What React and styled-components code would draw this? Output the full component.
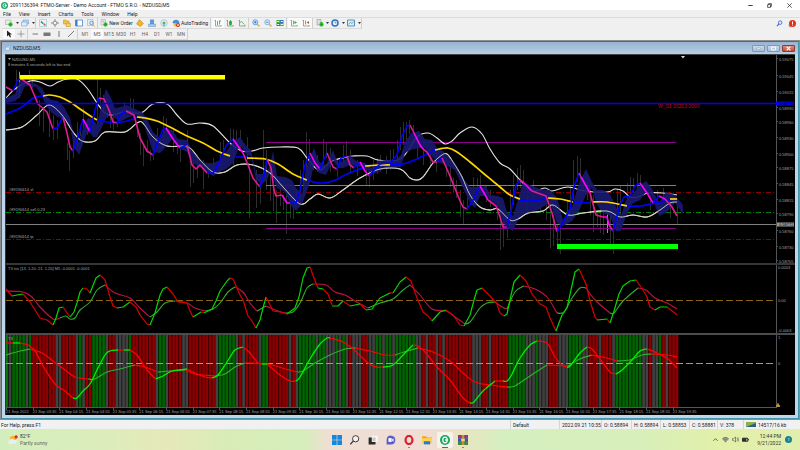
import React from 'react'
import styled, { createGlobalStyle } from 'styled-components'

const UI_FONT = 'Roboto, "Open Sans", sans-serif'
const CHART_FONT = '"Liberation Sans", Arial, sans-serif'

const GlobalStyle = createGlobalStyle`
  * { box-sizing: border-box; }
  body {
    margin: 0;
    background: #f0f0f0;
    color: #222;
    font: 5px/8px ${UI_FONT};
  }
  svg { display: block; }
`

const Button = styled.button`
  border: 0;
  padding: 0;
  margin: 0;
  background: none;
  color: inherit;
  font: inherit;
  display: flex;
  align-items: center;
  justify-content: center;
`

const TitleBar = styled.header`
  height: 10px;
  background: #fff;
  display: flex;
  align-items: center;
  gap: 2px;
  padding: 0 5px 0 1px;
  color: #222;
`

const Spacer = styled.div`
  flex: 1;
`

const WindowButton = styled(Button)`
  width: 17px;
  height: 10px;
  &:last-child { width: 12px; margin-left: 3px; }
`

const MenuBar = styled.nav`
  display: flex;
  gap: 8px;
  height: 8px;
  padding: 0 3px;
  border-bottom: 1px solid #dcdcdc;
  color: #222;
`

const Toolbar = styled.div`
  display: flex;
  align-items: center;
  height: 11px;
  padding: 0 2px;
`

const ToolGroup = styled.div`
  display: flex;
  align-items: center;
  height: 11px;
  padding-left: 1px;
  border-right: 1px solid #cfcfcf;
  border-bottom: 1px solid #dadada;
`

const ToolButton = styled(Button)`
  width: ${p => p.$width || 12}px;
  height: 10px;
  gap: 1px;
  background: ${p => (p.$on ? '#fafafa' : 'transparent')};
  color: ${p => (p.$dim ? '#666' : '#222')};
  white-space: nowrap;
`

const RightTools = styled.div`
  display: flex;
  margin-left: auto;
  gap: 1px;
`

const Mdi = styled.main`
  background: #8d8d8d;
  padding: 1px;
`

const ChartWindow = styled.section`
  background: #bfd5ec;
  border: 1px solid #4b6c80;
  border-right-color: #4495a8;
  border-bottom-color: #4495a8;
  padding: 0 3px 3px;
`

const ChartTitle = styled.div`
  display: flex;
  align-items: center;
  height: 12px;
  margin: 0 -3px;
  padding: 0 3px;
  gap: 2px;
  color: #222;
  background: linear-gradient(#98b4d2, #b7cee6);
`

const FrameButton = styled(Button)`
  width: 13px;
  height: 7px;
  border: 1px solid ${p => (p.$close ? '#8e3a31' : '#7f97b2')};
  border-radius: 1px;
  background: ${p => (p.$close ? 'linear-gradient(#dc8f80, #c64a33)' : 'linear-gradient(#c9daec, #a5bfdb)')};
`

const Panes = styled.div`
  background: #000;
  border-left: 1px solid #333;
  border-top: 1px solid #444;
`

const Pane = styled.svg`
  width: 100%;
  height: auto;
  font-family: ${CHART_FONT};
  font-size: 4px;
  fill: none;
`

const StatusBar = styled.footer`
  display: flex;
  height: 9px;
  color: #222;
  background: #f1f1f1;
`

const Status = styled.div`
  display: flex;
  align-items: center;
  gap: 2px;
  width: ${p => (p.$width ? p.$width + 'px' : 'auto')};
  flex: ${p => (p.$grow ? 1 : 'none')};
  padding: 0 ${p => (p.$grow ? 1 : 2)}px;
  border-right: 1px solid #d5d5d5;
  white-space: nowrap;
  &:last-child { border: 0; }
`

const Taskbar = styled.footer`
  display: grid;
  grid-template-columns: 1fr auto 1fr;
  align-items: center;
  height: 21px;
  padding: 0 8px;
  background: linear-gradient(90deg, #d3eebd 0%, #d9eebc 10%, #e6e9ba 21%, #d9ecb8 28%, #d5eebb 38%, #efdfd3 41%, #f0ddd3 54%, #e9e5bf 58%, #d5efbf 63%, #d8efbb 80%, #e2f0a8 90%, #e0efae 100%);
`

const Weather = styled(Button)`
  justify-content: flex-start;
  justify-self: start;
  gap: 2px;
  text-align: left;
  line-height: 7px;
  color: #333;
  small { display: block; font-size: 5px; color: #666; }
`

const Apps = styled.div`
  display: flex;
  gap: 2px;
`

const AppButton = styled(Button)`
  position: relative;
  width: 16px;
  height: 16px;
  border-radius: 2px;
  background: ${p => (p.$active ? '#f6f3ec' : 'transparent')};
  &::after {
    content: '';
    position: absolute;
    bottom: 0;
    width: ${p => (p.$active ? 6 : p.$open ? 2 : 0)}px;
    height: 1px;
    background: ${p => (p.$active ? '#257f8e' : '#888')};
  }
`

const Tray = styled.div`
  justify-self: end;
  display: flex;
  align-items: center;
  gap: 3px;
`

const Clock = styled.div`
  width: 26px;
  margin-left: 3px;
  text-align: right;
  line-height: 7px;
  color: #333;
`

const Count = styled.span`
  width: 7px;
  height: 7px;
  margin-left: 1px;
  border-radius: 50%;
  background: #1d7f93;
  color: #fff;
  font-size: 4px;
  line-height: 7px;
  text-align: center;
`

const Icon = ({ size = 8, children }) => (
  <svg width={size} height={size} viewBox="0 0 16 16" fill="none" aria-hidden="true">
    {children}
  </svg>
)

const PLUS = <path d="M11 7v8M7 11h8" stroke="#12b012" strokeWidth="4" />
const AXES = <path d="M3 2v12h12M1 4l2-2M13 12l2 2" stroke="#7d8c7d" strokeWidth="1.5" />

const ICONS = {
  logo: <><circle cx="8" cy="8" r="8" fill="#18a562" /><ellipse cx="8" cy="8" rx="3.500" ry="4.500" stroke="#fff" strokeWidth="2" /><path d="M8 8h5" stroke="#fff" strokeWidth="2" /></>,
  newChart: <><path d="M1 2h11v9H1z" fill="#e4efe2" stroke="#8da08d" />{PLUS}</>,
  profiles: <><path d="M4 2h11v8H4z" fill="#bcd9f5" stroke="#5c8fc5" /><path d="M1 6h11v8H1z" fill="#dcecfb" stroke="#5c8fc5" /></>,
  market: <><path d="M1 1h14v14H1z" fill="#eaf4fb" stroke="#7fb4da" /><path d="M4 5l4 4" stroke="#1a9a2b" strokeWidth="3" /><path d="M9 9l4 4" stroke="#d8572a" strokeWidth="3" /></>,
  cross: <><circle cx="8" cy="8" r="4" stroke="#777" strokeWidth="1.500" /><path d="M8 0v5M8 11v5M0 8h5M11 8h5" stroke="#777" strokeWidth="1.500" /></>,
  folder: <><path d="M1 2h5l1 2h5v6H1z" fill="#f3c44a" stroke="#b98a1e" /><path d="M6 8h4l1 1h4v6H6z" fill="#f6d064" stroke="#b98a1e" /></>,
  terminal: <><path d="M1 2h14v12H1z" fill="#fff" stroke="#3f7fc4" strokeWidth="1.500" /><path d="M1 2h4v12H1z" fill="#3f7fc4" /></>,
  tester: <><path d="M1 1h11v12H1z" fill="#e5eef7" stroke="#8aa3bd" /><circle cx="9" cy="8" r="3.500" stroke="#4b81bd" strokeWidth="1.500" /><path d="M12 11l3 4" stroke="#d99c28" strokeWidth="2" /></>,
  order: <><path d="M2 1h9v11H2z" fill="#eee" stroke="#999" /><path d="M4 4h5M4 6h5" stroke="#999" />{PLUS}</>,
  meta: <path d="M7 1l8 8-6 6-8-5z" fill="#f0b52b" stroke="#c67d14" />,
  upload: <><path d="M4 1h8v9H4z" fill="#5a9bdd" /><path d="M1 10h14v5H1z" fill="#a9c8e8" stroke="#6592c4" /></>,
  signal: <><circle cx="8" cy="8" r="6.500" stroke="#8abde0" strokeWidth="1.500" /><circle cx="8" cy="8" r="3" fill="#58b265" /><path d="M8 9v6" stroke="#58b265" strokeWidth="2" /></>,
  auto: <><path d="M1 8c0-9 14-9 14 0z" fill="#4c8fce" /><path d="M2 8h12l-4 7H5z" fill="#eab23b" /><circle cx="12" cy="12" r="4" fill="#dc2a1e" /><path d="M10.500 10.500h3v3h-3z" fill="#fff" /></>,
  bars: <>{AXES}<path d="M7 4v8M11 3v8M11 4h3" stroke="#2f9b3c" strokeWidth="1.500" /></>,
  candles: <>{AXES}<path d="M7 5h4v6H7zM9 2v11" fill="#22aa33" stroke="#22aa33" strokeWidth="1.500" /></>,
  line: <>{AXES}<path d="M4 7c4-4 5 1 9 4" stroke="#2f9b3c" strokeWidth="1.500" /></>,
  zoomIn: <><path d="M9 9l6 6" stroke="#dfae3d" strokeWidth="3" /><circle cx="6.500" cy="6.500" r="5" fill="#cfe6f9" stroke="#4a8bd0" strokeWidth="1.500" /><path d="M4 6.500h5M6.500 4v5" stroke="#2f65b0" strokeWidth="1.500" /></>,
  zoomOut: <><path d="M9 9l6 6" stroke="#dfae3d" strokeWidth="3" /><circle cx="6.500" cy="6.500" r="5" fill="#dcecf9" stroke="#69a0d8" strokeWidth="1.500" /><path d="M4 6.500h5" stroke="#2f65b0" strokeWidth="1.500" /></>,
  tile: <><path d="M1 2h7v6H1zM8 8h7v6H8z" fill="#4eab2e" /><path d="M8 2h7v6H8zM1 8h7v6H1z" fill="#336fc0" /><path d="M2.500 5h4M9.500 5h4M2.500 11h4M9.500 11h4" stroke="#fff" strokeWidth="2" /></>,
  shift: <>{AXES}<path d="M7 3v8" stroke="#777" strokeWidth="1.500" /><path d="M9 4l5 3-5 3z" fill="#22aa33" /></>,
  scroll: <>{AXES}<path d="M7 3v8" stroke="#777" strokeWidth="1.500" /><path d="M14 4L9 7l5 3z" fill="#c05b3c" /></>,
  indicators: <><path d="M2 1h8v11H2z" fill="#ddd" stroke="#888" /><path d="M11 6v9M7 11h8" stroke="#12b012" strokeWidth="4" /></>,
  clock: <><circle cx="8" cy="8" r="6" fill="#eaf4fc" stroke="#2874c4" strokeWidth="3" /><path d="M8 5v3h3" stroke="#333" /></>,
  template: <><path d="M1 2h14v12H1z" fill="#d8e9f8" stroke="#5990c6" strokeWidth="2" /><path d="M3 10l4-3 3 2 3-4" stroke="#5da07f" strokeWidth="1.500" /></>,
  search: <><circle cx="9.500" cy="6" r="4" stroke="#3a66cf" strokeWidth="2" /><path d="M7 9l-5 5" stroke="#3a66cf" strokeWidth="2.500" /></>,
  alert: <><path d="M0 10l7-3v8H3z" fill="#bbb" /><circle cx="9" cy="7" r="7" fill="#e03418" /><path d="M9 3v6M9 10.500v1" stroke="#fff" strokeWidth="2" /></>,
  cursor: <path d="M4 1v12l3-3 3 5 2-1-2-5h4z" fill="#222" />,
  plus: <path d="M8 1v14M1 8h14" stroke="#888" strokeWidth="1.500" />,
  hline: <path d="M3 8h11" stroke="#777" strokeWidth="2" />,
  channel: <path d="M1 5h14v7H1z" fill="#777" />,
  vline: <path d="M8 2v12" stroke="#777" strokeWidth="2" />,
  trend: <path d="M2 14L14 2" stroke="#777" strokeWidth="2" />,
  windows: <path d="M0 0h7.500v7.500H0zM8.500 0H16v7.500H8.500zM0 8.500h7.500V16H0zM8.500 8.500H16V16H8.500z" fill="#1687dc" />,
  find: <><circle cx="9" cy="6" r="5" fill="#f7f1ed" stroke="#333" strokeWidth="1.500" /><path d="M5.500 9.500l-5 5.500" stroke="#333" strokeWidth="2" /></>,
  tasks: <><path d="M6 1h10v10H6z" fill="#f5f5f5" /><path d="M1 4h5v7h6v4H1z" fill="#292929" /><path d="M7 4h5v6H7z" fill="#c7c7c7" /></>,
  chat: <><path d="M1 15V7a7 7 0 1 1 7 8z" fill="#5b5fc7" /><path d="M4 5h5v6H4z" fill="#fff" /><path d="M9 8l3-3v6z" fill="#fff" /></>,
  opera: <ellipse cx="8" cy="8" rx="5.500" ry="6.500" stroke="#dc1e2e" strokeWidth="3.500" />,
  explorer: <><path d="M0 2h6l2 2h8v5H0z" fill="#e8a91c" /><path d="M0 5h16v9H0z" fill="#ffd257" /><path d="M3 10h10v5H3z" fill="#217ccb" /></>,
  winrar: <><path d="M0 0h16v5H0z" fill="#a23569" /><path d="M0 5h16v6H0z" fill="#3a56a8" /><path d="M0 11h16v5H0z" fill="#3d8748" /><path d="M6 0h4v16H6z" fill="#c58d3d" /><path d="M5 6h6v4H5z" fill="#eed36a" /></>,
  weather: <><circle cx="8" cy="6" r="5" fill="#f7b52c" /><path d="M1 14a4 4 0 0 1 2-6 4 4 0 0 1 7 0 3 3 0 0 1 2 6z" fill="#e7eef7" /><circle cx="13" cy="3" r="2.500" fill="#d6291b" /></>,
  up: <path d="M3 11l5-5 5 5" stroke="#444" strokeWidth="1.800" />,
  wifi: <><path d="M0 6c5-5 11-5 16 0L8 15z" fill="#777" /><path d="M2 8c4-3 8-3 12 0M5 11c2-2 4-2 6 0" stroke="#dcefb0" /></>,
  sound: <><path d="M1 6h3l4-4v12l-4-4H1z" stroke="#555" strokeWidth="1.500" /><path d="M11 5c2 2 2 4 0 6M13 3c3 3 3 7 0 10" stroke="#555" strokeWidth="1.500" /></>,
  battery: <><path d="M1 5h12v7H1z" fill="#333" stroke="#222" strokeWidth="2" /><path d="M10 6h2v5h-2z" fill="#ddd" /><path d="M15 7v3" stroke="#222" strokeWidth="2" /></>,
}

// name, label, width, options
const MAIN_TOOLS = [
  [['newChart', 'New chart', 12], ['caret'], ['profiles', 'Profiles', 12], ['caret']],
  [['market', 'Market Watch'], ['cross', 'Data Window'], ['folder', 'Navigator'], ['terminal', 'Terminal'], ['tester', 'Strategy Tester']],
  [['order', 'New Order', 35, true], ['meta', 'MetaEditor'], ['upload', 'Publish'], ['signal', 'Signals'], ['auto', 'AutoTrading', 40, true]],
  [['bars', 'Bar chart'], ['candles', 'Candlesticks'], ['line', 'Line chart']],
  [['zoomIn', 'Zoom in'], ['zoomOut', 'Zoom out'], ['tile', 'Tile windows']],
  [['shift', 'Auto scroll'], ['scroll', 'Chart shift']],
  [['indicators', 'Indicators', 11], ['caret'], ['clock', 'Periods', 12], ['caret'], ['template', 'Templates', 12], ['caret']],
]
const PRESSED = ['bars', 'shift', 'scroll', 'cursor', 'M5']
const DRAW_TOOLS = [['cursor', 'Cursor'], ['plus', 'Crosshair']]
const LINE_TOOLS = [['hline', 'Horizontal line'], ['channel', 'Channel'], ['vline', 'Vertical line'], ['trend', 'Trendline']]
const PERIODS = ['M1', 'M5', 'M15', 'M30', 'H1', 'H4', 'D1', 'W1', 'MN']

const parse = s => s.split(' ').map(p => p.split(',').map(Number))

// Catmull-Rom spline through the points
const curve = s => {
  const p = parse(s)
  let d = `M${p[0]}`
  for (let i = 0; i < p.length - 1; i++) {
    const a = p[i - 1] || p[i]
    const b = p[i]
    const c = p[i + 1]
    const e = p[i + 2] || c
    d += `C${b[0] + (c[0] - a[0]) / 6},${b[1] + (c[1] - a[1]) / 6} ${c[0] - (e[0] - b[0]) / 6},${c[1] - (e[1] - b[1]) / 6} ${c}`
  }
  return d
}

const UPPER = '6,98 15,89 30,81 40,82 50,86 58,82 67,79 77,79 87,88 97,103 105,113 112,115 127,111 135,113 143,112 153,104 167,104 177,115 187,124 200,123 213,126 230,143 242,151 252,151 263,148 280,147 298,148 307,158 319,170 332,161 347,157 353,156 367,156 378,160 398,160 407,152 417,137 428,133 437,138 445,144 452,141 460,133 472,127 482,134 490,149 500,163 510,169 520,180 532,191 545,188 552,191 568,187 585,191 607,192 615,189 623,191 630,197 638,197 648,193 663,193 677,195'
const LOWER = '6,130 22,127 37,115 49,105 62,115 73,132 82,141 95,141 105,132 125,132 137,123 143,123 153,137 167,146 188,147 200,160 213,172 225,172 237,165 253,165 270,173 283,187 300,204 310,199 318,194 330,198 343,190 360,178 380,169 400,169 410,178 417,180 423,177 433,163 442,155 447,154 453,162 462,177 470,195 480,207 490,210 498,209 510,220 518,219 528,213 543,211 553,205 568,215 583,213 607,211 620,217 633,215 647,217 660,210 670,203 677,202'

const MIDDLE = [
  ['b', '6,114 22,107 33,98 43,96'],
  ['y', '43,96 50,95 60,97 70,102 80,109 92,117 97,120'],
  ['b', '97,120 107,122 122,122 133,119 137,117'],
  ['y', '137,117 145,118 157,121 170,127 187,136 203,143 217,151 230,156'],
  ['b', '236,157 247,157'],
  ['y', '247,158 265,159 278,164 293,174 307,180'],
  ['b', '307,180 320,183 333,181 347,174 365,167'],
  ['y', '365,166 380,165 390,165'],
  ['b', '390,165 403,164 417,159 435,150'],
  ['y', '435,150 448,148 457,152 470,162 483,173 500,187 510,195 520,199'],
  ['b', '520,200 530,201 540,200 548,198'],
  ['y', '548,198 560,199 573,202'],
  ['b', '573,202 590,203'],
  ['y', '592,202 607,202 627,206'],
  ['b', '627,206 640,206 655,203 670,200'],
  ['y', '670,199 677,199'],
]

const FAST = [
  ['p', '6,87 13,91'], ['b', '13,91 18,80 20,79'], ['p', '20,78 30,85 38,104 47,112 53,129'],
  ['b', '53,129 57,128 63,117'], ['p', '63,117 67,133 70,147 73,151'], ['b', '73,151 78,137 83,119'],
  ['m', '83,119 90,132'], ['b', '90,132 95,110 99,98'], ['p', '99,98 104,99 109,110 113,122 117,123'],
  ['b', '117,123 120,115 126,111'], ['p', '126,111 134,115 140,138 147,151 153,155'], ['b', '153,155 159,139 163,129 166,128'],
  ['m', '166,128 173,139 180,148'], ['b', '180,148 187,145'], ['p', '187,145 192,165 196,169 200,165 207,173'],
  ['b', '207,173 213,173 218,165 226,146 233,139'], ['m', '233,139 243,153'], ['p', '243,153 248,165 253,178 260,187'],
  ['b', '260,187 264,175 267,159'], ['p', '267,159 271,168 274,190 276,196 282,195'], ['m', '282,195 287,203 290,203'],
  ['b', '290,203 296,203 300,190 305,165 310,153'], ['m', '310,153 315,163 320,169'], ['b', '320,169 323,161 327,153'],
  ['p', '327,153 333,167 337,169'], ['b', '337,169 341,158 347,156'], ['p', '347,156 350,165 354,168'],
  ['b', '354,168 360,162'], ['m', '360,162 365,171 369,176'], ['b', '369,176 375,169 380,164 390,163 397,155 402,136 407,126 410,125'],
  ['p', '410,125 414,133'], ['m', '414,133 420,145 423,149'], ['p', '423,149 427,152 433,162 437,162'], ['b', '437,162 442,158'],
  ['p', '442,158 450,176 460,201 463,207 467,209'], ['b', '467,209 473,200 480,186'], ['m', '480,186 488,200'],
  ['p', '488,200 496,206 500,217 503,227 507,227'], ['b', '507,227 511,211 516,185 520,180'], ['p', '520,180 523,182'],
  ['m', '523,182 532,191'], ['p', '532,191 546,196 552,213 557,232'], ['b', '557,232 563,222 570,209 574,187 579,173'],
  ['p', '579,173 581,177'], ['m', '581,177 590,193'], ['p', '590,193 596,215 603,217'], ['m', '603,217 607,217 609,225'],
  ['p', '609,225 613,231'], ['b', '613,231 620,205 624,197 630,196 635,186 640,183'], ['m', '640,183 647,193 653,203'],
  ['b', '653,203 659,196'], ['m', '659,196 665,199'], ['p', '665,199 672,207 677,216'],
]

// x, top, bottom
const CLOUD = parse('6,98,103 15,94,101 20,80,97 25,81,86 36,84,87 42,88,96 47,97,107 52,100,113 58,101,117 64,107,119 70,118,126 74,135,147 79,143,155 83,128,144 88,118,130 93,119,137 97,125,137 102,103,127 106,89,118 111,98,113 115,108,118 120,107,122 127,105,118 135,109,115 142,112,118 147,119,134 153,132,152 160,138,153 165,129,148 172,130,139 178,139,148 187,140,152 193,152,163 200,159,167 206,163,172 213,163,176 220,160,172 226,152,169 233,142,163 240,137,145 247,147,155 251,150,156 256,174,180 262,174,184 267,173,180 270,165,172 273,151,178 277,176,188 285,177,192 292,180,207 296,188,211 302,194,204 306,168,194 310,158,182 314,148,165 319,162,173 326,165,175 333,150,160 338,163,168 343,161,168 350,155,165 356,161,166 365,163,168 371,168,175 378,161,172 386,160,168 395,160,168 401,155,167 405,142,153 411,133,150 419,131,148 425,139,148 432,140,156 437,148,162 443,151,164 455,163,170 463,178,188 470,187,203 475,187,208 480,187,196 486,186,196 490,195,200 498,196,206 503,198,222 507,212,228 513,216,231 519,196,218 523,182,214 530,185,213 540,189,209 550,190,202 557,198,223 563,220,226 572,207,221 579,183,211 586,169,195 592,182,188 597,190,205 603,190,213 610,194,216 616,207,231 621,216,231 626,200,216 632,195,204 640,185,200 646,181,192 651,187,195 659,203,216 666,192,213 675,195,203 683,205,214')

const CANDLES = parse('16,70,92 19,71,98 29,70,82 32,78,88 39,100,126 43,108,132 49,107,137 53,115,140 57,120,139 67,143,160 69,150,171 73,140,158 77,122,150 80,125,136 83,108,128 87,120,135 97,79,128 100,88,110 103,95,112 107,98,118 110,103,128 113,110,130 117,115,127 124,102,118 130,98,116 133,99,118 137,124,137 140,133,155 143,145,166 147,140,153 150,150,161 153,140,160 157,128,145 163,116,140 166,118,134 173,128,152 177,143,154 180,140,162 187,130,150 190,148,187 193,160,183 197,155,178 203,160,189 208,165,178 213,158,172 220,142,168 223,140,155 230,129,150 233,129,165 236,130,150 240,130,148 247,137,160 249,165,218 256,170,208 260,178,204 263,130,175 266,150,190 270,160,201 273,185,211 276,190,223 280,188,206 283,195,210 286,192,234 290,200,218 293,195,219 296,190,208 300,170,200 303,160,185 306,132,170 309,139,162 313,150,170 317,155,172 323,139,165 326,143,158 330,148,172 337,160,177 343,145,165 346,141,158 350,150,172 357,160,176 366,165,185 369,168,187 373,160,180 377,158,174 380,155,172 386,156,174 390,150,170 393,149,168 397,140,162 400,127,150 403,122,145 406,122,140 409,120,134 413,125,140 417,135,158 423,140,165 430,148,165 436,150,172 446,158,177 450,165,187 453,178,192 456,180,198 460,190,217 463,200,224 467,195,210 473,177,198 477,178,192 480,175,190 486,185,202 490,190,207 497,200,220 500,205,250 503,220,247 507,215,238 510,190,228 513,175,205 517,168,190 520,165,188 523,170,190 527,185,215 533,180,200 540,190,212 546,190,220 550,200,248 553,215,246 557,225,248 560,215,254 567,200,220 570,185,215 573,160,200 577,156,182 580,158,182 583,175,195 587,180,200 590,190,215 593,195,232 597,210,227 600,205,233 603,205,235 607,205,233 610,215,250 613,225,254 617,190,230 620,185,215 627,183,200 630,177,195 633,178,192 637,173,190 640,175,190 643,185,195 650,195,210 657,190,205 663,188,203 670,198,218 677,205,225')

const T3_SLOW = [
  ['c', '6,291 23,292 32,297 40,307 53,319 60,318'], ['d', '60,318 66,316 70,319 75,318 80,310 90,302 97,290 105,285'],
  ['c', '105,285 115,293 130,298 140,308 150,317'], ['d', '150,317 157,312 165,303 175,301'],
  ['c', '175,301 187,303 195,308 205,311'], ['d', '205,311 213,309 220,303 228,292 235,287'],
  ['c', '235,287 243,292 250,303 257,311'], ['d', '257,311 266,306'], ['c', '266,306 275,310 285,313'],
  ['d', '285,313 293,312 300,303 307,288 313,284'], ['c', '313,284 326,285 335,292 345,295 355,301 368,308'],
  ['d', '368,308 380,303 393,299 403,290 410,285'], ['c', '410,285 420,295 432,309 446,311 455,317 465,324'],
  ['d', '465,324 470,322 480,308 487,303 495,302'], ['c', '495,302 502,307 507,309'], ['d', '507,309 515,292 524,286'],
  ['c', '524,286 535,289 547,297 557,313'], ['d', '557,313 564,312 572,298 580,288 586,288'], ['c', '586,288 595,300 610,313'],
  ['d', '610,313 614,313 623,301 638,288'], ['c', '638,288 646,290 655,298 667,303 677,309'],
]

const T3_FAST = [
  ['r', '6,289 12,296'], ['g', '12,296 17,295 23,294'], ['r', '23,294 30,302 40,318 47,320 53,325'],
  ['g', '53,325 56,318 59,308 63,307'], ['r', '63,307 70,317'], ['g', '70,317 74,312 77,303 80,292 83,288'],
  ['r', '83,288 87,289 90,293'], ['g', '90,293 96,278 100,275'], ['r', '100,275 105,280 110,297 113,306 117,308'],
  ['g', '117,308 123,307 130,302'], ['r', '130,302 136,307 140,315 147,324 150,325'], ['g', '150,325 155,313 160,295 163,289 167,287'],
  ['r', '167,287 173,294 178,302 187,303 190,311 193,317'], ['g', '193,317 201,312'], ['r', '201,312 204,313'],
  ['g', '204,313 212,309 216,301 220,291 227,281 230,278'], ['r', '230,278 233,279 240,295 243,300 248,316 252,321 256,328'],
  ['g', '256,328 260,320 263,308 266,297'], ['r', '266,297 273,311 280,312 287,314'], ['g', '287,314 295,308 299,297 303,278 307,268 310,267'],
  ['r', '310,267 314,278 318,288'], ['g', '318,288 323,289'], ['r', '323,289 328,294 332,305'], ['g', '332,306 338,306 343,301'],
  ['r', '343,301 350,306'], ['g', '350,306 360,304'], ['r', '360,304 366,310'], ['g', '366,310 372,309 380,298 390,293'],
  ['r', '390,293 393,293'], ['g', '393,293 400,282 406,277'], ['r', '406,277 411,281 417,298 423,312 428,316 432,321'],
  ['g', '432,321 440,312 446,310'], ['r', '446,310 453,315 460,325 464,326'], ['g', '464,326 470,315 474,300 477,290 482,288'],
  ['r', '482,288 490,296 497,304 500,313 504,316'], ['g', '504,316 507,314 510,300 514,282 520,275'],
  ['r', '520,275 526,281 532,294 540,304 546,307 550,318 556,331'], ['g', '556,331 562,315 567,308 571,290 575,272 579,269'],
  ['r', '579,269 586,284 590,301 595,317 597,320'], ['g', '597,320 607,319'], ['r', '607,319 610,323'],
  ['g', '610,323 614,311 619,294 623,286 630,281 636,280'], ['r', '636,280 643,290 647,297 650,307 655,310'],
  ['g', '655,310 660,307 667,307'], ['r', '667,307 671,310 677,315'],
]

const TREND_SLOW = [
  ['d', '6,355 20,351 30,349'], ['s', '30,349 42,353 53,361 65,370 75,377 88,379'], ['d', '88,379 95,379 107,372 120,369 135,365'],
  ['s', '135,365 145,367 158,372'], ['d', '158,372 170,371 185,370'], ['s', '185,370 195,374 215,376'],
  ['d', '215,376 225,374 235,367 245,363'], ['s', '245,363 268,364 285,369 297,372'], ['d', '297,372 303,371 315,363 330,355 345,349 356,348'],
  ['s', '356,348 370,351 385,355 395,355'], ['d', '395,355 407,351 418,348'], ['s', '418,348 433,352 450,361 463,373 475,382 490,385 507,387'],
  ['d', '507,387 515,386 530,376 547,365'], ['s', '547,365 568,366'], ['d', '568,366 580,359 592,355'], ['s', '592,355 603,357 617,361'],
  ['d', '617,361 630,360 642,355 652,354'], ['s', '652,354 667,355 677,357'],
]

const TREND_FAST = [
  ['s', '6,343 13,343'], ['l', '13,343 20,343'], ['s', '20,343 28,345 35,351 43,366 55,384 65,391 73,398'],
  ['l', '73,398 77,398 83,391 90,384 97,370 105,355 110,351 118,350'], ['s', '118,350 124,350'], ['l', '124,350 130,350'],
  ['s', '130,350 137,355 147,370 156,379'], ['l', '156,379 163,376 172,371 187,369'], ['s', '187,369 195,373 205,377 212,378'],
  ['l', '212,378 218,375 227,362 235,350 243,347'], ['s', '243,347 250,353 258,363 262,364'], ['l', '262,364 267,364'],
  ['s', '267,364 280,375 290,381 296,381'], ['l', '296,381 300,377 310,359 320,344 327,338 330,338'],
  ['s', '330,338 343,342 353,349 368,363 376,367 383,367'], ['l', '383,367 393,365 403,355 413,345'],
  ['s', '413,345 418,346 426,353 437,367 450,380 463,398 470,403'], ['l', '470,403 474,402 483,391 495,381'],
  ['s', '495,381 503,381'], ['l', '503,381 507,381 511,376 520,358 530,345 537,341'], ['s', '537,341 547,343 555,357 562,365 567,367'],
  ['l', '567,367 570,366 580,353 587,347'], ['s', '587,347 592,349 600,359 610,372 616,374'], ['l', '616,374 622,370 632,360 640,351 647,349'],
  ['s', '647,349 657,353 668,359 677,368'],
]

const COLORS = {
  b: '#0000ff', y: '#ffd700', p: '#e01c90', m: '#ff00ff', g: '#00d800', r: '#d80000',
  c: '#c01440', d: '#2fae2f', s: '#ff0000', l: '#00f000',
}

// runs of histogram bars: colour letter and count
const RUNS = 'x2 G4 x1 G1 R7 x2 R4 x1 G1 x1 R2 G4 x1 R2 x4 G1 R7 x1 G2 x1 R4 x2 R8 x1 G5 x1 R1 x1 R4 x1 G2 R6 x1 R1 x1 G5 x1 G2 x3 G1 x1 G1 x1 R1 x3 R2 x2 G2 x1 G2 x1 G6 x2 R1 x1 R2 x1 R1 x1 R8 x3 R2 x1 R5 G5 x3 G1 x3 R3 x3 G4 x2 R3 x1 R3 x1 G8 x2 R1 x2 G1 R1 x1 R3'
const HIST_COLORS = { x: '#414141', G: '#006400', R: '#8b0000' }
const HIST = RUNS.split(' ').flatMap(r => Array(Number(r.slice(1))).fill(r[0]))

const PRICES = [
  ['0.59075', 59], ['0.59045', 76], ['0.59015', 92], ['0.58990', 108], ['0.58960', 122], ['0.58930', 138], ['0.58900', 154],
  ['0.58875', 168], ['0.58845', 184], ['0.58815', 200], ['0.58790', 214], ['0.58760', 231], ['0.58730', 247], ['0.58705', 261],
]
const TIMES = ['21 Sep 2022', '21 Sep 03:35', '21 Sep 04:15', '21 Sep 04:55', '21 Sep 05:35', '21 Sep 06:15', '21 Sep 06:55', '21 Sep 07:35', '21 Sep 08:15', '21 Sep 08:55', '21 Sep 09:35', '21 Sep 10:15', '21 Sep 10:55', '21 Sep 11:35', '21 Sep 12:15', '21 Sep 12:55', '21 Sep 13:35', '21 Sep 14:15', '21 Sep 14:55', '21 Sep 15:35', '21 Sep 16:15', '21 Sep 16:55', '21 Sep 17:35', '21 Sep 18:15', '21 Sep 18:55', '21 Sep 19:35']

const Lines = ({ data, width, smooth = true }) => data.map(([c, pts]) => (
  <path key={c + pts} d={smooth ? curve(pts) : 'M' + pts} stroke={COLORS[c]} strokeWidth={width} strokeLinejoin="round" />
))

const AxisLine = ({ y1, y2 }) => <path d={`M776.500 ${y1}V${y2}`} stroke="#555" />

const PricePane = () => {
  const cloud = 'M' + CLOUD.map(c => `${c[0]},${c[1]}`).join(' ') + ' ' + [...CLOUD].reverse().map(c => `${c[0]},${c[2]}`).join(' ') + 'Z'
  return (
    <Pane viewBox="6 55 789 208" role="img" aria-label="NZDUSD M5 price chart">
      <path d={CANDLES.map(c => `M${c[0] + 0.5},${c[1]}V${c[2]}`).join('')} stroke="#2e2e2e" />
      <path d="M19.500 72V93M607.500 212V233" stroke="#999" />
      <path d="M266 142.500H676M266 228.500H676" stroke="#8b008b" />
      <path d="M266 185.500H676" stroke="#808080" />
      <path d="M6 192.500H774M6 239.500H774" stroke="#8b0000" strokeDasharray="5 2 1 2" />
      <path d="M6 212.500H774" stroke="#008000" strokeDasharray="5 2 1 2" />
      <path d="M6 224.500H776" stroke="#808080" />
      <path d={curve(UPPER) + curve(LOWER)} stroke="#e8e8e8" strokeWidth="1.100" />
      <path d={cloud} fill="#191970" fillOpacity="0.920" />
      <path d={curve(LOWER)} stroke="#cfcdb8" strokeWidth="0.900" />
      <Lines data={MIDDLE} width="1.700" />
      <Lines data={FAST} width="1.600" smooth={false} />
      <path d="M6 103.500H776" stroke="#0000ff" strokeWidth="1.600" />
      <path d="M20 75H225V79.500H20z" fill="#ffff00" />
      <path d="M557 244H678V249H557z" fill="#00ff00" />
      <path d="M681 56h4l-2 2.500z" fill="#ddd" />
      <path d="M8 58h3l-1.500 2z" fill="#aaa" />
      <g fill="#a8a8a8">
        <text x="12" y="61">NZDUSD,M5</text>
        <text x="8" y="66">8 minutes 6 seconds left to bar end</text>
        <text x="9" y="191">#89190614 sl</text>
        <text x="9" y="211">#89190614 sell 0.23</text>
        <text x="9" y="238">#89190614 tp</text>
      </g>
      <text x="658" y="108" fill="#c80000" fontSize="5">W_S1 23223.0000</text>
      <AxisLine y1={55} y2={263} />
      {PRICES.map(([label, y]) => (
        <React.Fragment key={label}>
          <path d={`M777 ${y - 0.5}h1`} stroke="#555" />
          <text x="779" y={y + 1.5} fill="#a0a0a0">{label}</text>
        </React.Fragment>
      ))}
      <path d="M776 101.500H794V105.500H776z" fill="#0000ff" />
      <text x="779" y="105" fill="#000">0.58994</text>
      <path d="M777 222.500H794V226.500H777z" fill="#999" />
      <text x="779" y="226" fill="#000">0.58772</text>
    </Pane>
  )
}

const T3Pane = () => (
  <Pane viewBox="6 263 789 70" role="img" aria-label="T3 indicator">
    <path d="M6 264H795" stroke="#484848" strokeWidth="1.500" />
    <path d="M6 300.500H776" stroke="#8a6410" strokeDasharray="7 3" />
    <Lines data={T3_SLOW} width="1.100" />
    <Lines data={T3_FAST} width="1.200" smooth={false} />
    <AxisLine y1={265} y2={333} />
    <g fill="#a0a0a0">
      <text x="8" y="270">T3 trix [13, 1.20; 21, 1.20] M5 -0.0001 -0.0001</text>
      <text x="778" y="269">0.0003</text>
      <text x="778" y="302">0.00</text>
      <text x="778" y="332">-0.0003</text>
    </g>
  </Pane>
)

const TrendPane = () => (
  <Pane viewBox="6 333 789 82" role="img" aria-label="Trend histogram">
    <path d="M6 334H795" stroke="#666" strokeWidth="1.500" />
    {HIST.map((c, i) => {
      const x = 5 + (i * 10) / 3
      return <path key={i} d={`M${x} 335h3.340V407h-3.340z`} fill={HIST_COLORS[c]} />
    })}
    <path d={HIST.map((c, i) => `M${5.3 + (i * 10) / 3} 335V407`).join('')} stroke="#000" strokeOpacity="0.450" />
    <path d="M6.500 335V407" stroke="#0a7a0a" />
    <path d="M6 363.500H776" stroke="#9a9a9a" strokeDasharray="7 3" />
    <Lines data={TREND_SLOW} width="1.200" />
    <Lines data={TREND_FAST} width="1.300" />
    <path d="M6 407.500H776" stroke="#555" />
    <AxisLine y1={335} y2={408} />
    <path d="M776 405h4v2h-4zM777 403.500h2v2h-2z" fill="#b98d28" />
    <g fill="#a0a0a0">
      <text x="8" y="340">T3</text>
      <text x="778" y="339">1</text>
      <text x="778" y="365">0</text>
      {TIMES.map((t, i) => <text key={t} x={6 + i * 26.67} y="413">{t}</text>)}
    </g>
    <path d={TIMES.map((t, i) => `M${6.5 + Math.round(i * 26.67)} 408v2`).join('')} stroke="#555" />
  </Pane>
)

const Tool = ({ tool: [name, label, width, showLabel] }) => {
  if (name === 'caret') {
    return (
      <ToolButton $width={4} aria-label="More">
        <svg width="3" height="2" viewBox="0 0 3 2"><path d="M0 0h3L1.500 2z" fill="#333" /></svg>
      </ToolButton>
    )
  }
  return (
    <ToolButton $width={width} $on={PRESSED.includes(name)} aria-label={label}>
      <Icon>{ICONS[name]}</Icon>
      {showLabel && label}
    </ToolButton>
  )
}

const APPS = [
  ['windows', 'Start'], ['find', 'Search'], ['tasks', 'Task view'], ['chat', 'Chat'],
  ['opera', 'Opera'], ['explorer', 'File Explorer'], ['logo', 'FTMO terminal'], ['winrar', 'WinRAR'],
]

const App = () => (
  <>
    <GlobalStyle />
    <TitleBar>
      <Icon size={7}>{ICONS.logo}</Icon>
      <span>2091136394: FTMO-Server - Demo Account - FTMO S.R.O. - NZDUSD,M5</span>
      <Spacer />
      <WindowButton aria-label="Minimize"><Icon size={5}><path d="M1 8h14" stroke="#333" strokeWidth="3" /></Icon></WindowButton>
      <WindowButton aria-label="Restore"><Icon size={5}><path d="M2 5h9v9H2zM5 5V2h9v9h-3" stroke="#333" strokeWidth="2.500" /></Icon></WindowButton>
      <WindowButton aria-label="Close"><Icon size={5}><path d="M1 1l14 14M15 1L1 15" stroke="#333" strokeWidth="2.500" /></Icon></WindowButton>
    </TitleBar>
    <MenuBar>
      {['File', 'View', 'Insert', 'Charts', 'Tools', 'Window', 'Help'].map(m => <Button key={m}>{m}</Button>)}
    </MenuBar>
    <Toolbar>
      {MAIN_TOOLS.map((group, i) => (
        <ToolGroup key={i}>
          {group.map((tool, j) => <Tool key={j} tool={tool} />)}
        </ToolGroup>
      ))}
      <RightTools>
        <ToolButton aria-label="Search"><Icon size={7}>{ICONS.search}</Icon></ToolButton>
        <ToolButton aria-label="Alerts"><Icon>{ICONS.alert}</Icon></ToolButton>
      </RightTools>
    </Toolbar>
    <Toolbar>
      <ToolGroup>{DRAW_TOOLS.map(t => <Tool key={t[0]} tool={t} />)}</ToolGroup>
      <ToolGroup>{LINE_TOOLS.map(t => <Tool key={t[0]} tool={t} />)}</ToolGroup>
      <ToolGroup>
        {PERIODS.map(p => <ToolButton key={p} $dim $on={PRESSED.includes(p)}>{p}</ToolButton>)}
      </ToolGroup>
    </Toolbar>
    <Mdi>
      <ChartWindow>
        <ChartTitle>
          <Icon size={6}>{ICONS.profiles}</Icon>
          <span>NZDUSD,M5</span>
          <Spacer />
          <FrameButton aria-label="Minimize chart"><Icon size={5}><path d="M2 6h12v4H2z" fill="#fff" stroke="#678" /></Icon></FrameButton>
          <FrameButton aria-label="Restore chart"><Icon size={5}><path d="M2 3h12v10H2z" stroke="#fff" strokeWidth="3" /></Icon></FrameButton>
          <FrameButton $close aria-label="Close chart"><Icon size={5}><path d="M2 2l12 12M14 2L2 14" stroke="#fff" strokeWidth="4" /></Icon></FrameButton>
        </ChartTitle>
        <Panes>
          <PricePane />
          <T3Pane />
          <TrendPane />
        </Panes>
      </ChartWindow>
    </Mdi>
    <StatusBar>
      <Status $grow>For Help, press F1</Status>
      <Status $width={49}>Default</Status>
      <Status $width={42}>2022.09.21 10:35</Status>
      <Status $width={30}>O: 0.58894</Status>
      <Status $width={29}>H: 0.58894</Status>
      <Status $width={29}>L: 0.58853</Status>
      <Status $width={28}>C: 0.58881</Status>
      <Status $width={26}>V: 378</Status>
      <Status $width={56}>
        <svg width="10" height="5" viewBox="0 0 10 5"><path d="M0 0h10v5H0z" fill="#8bb04e" /><path d="M0 5l10-4v4z" fill="#2f5f80" /></svg>
        14517/16 kb
      </Status>
    </StatusBar>
    <Taskbar>
      <Weather aria-label="Weather">
        <Icon size={10}>{ICONS.weather}</Icon>
        <span>82°F<small>Partly sunny</small></span>
      </Weather>
      <Apps>
        {APPS.map(([name, label]) => (
          <AppButton key={name} aria-label={label} $active={name === 'logo'} $open={name === 'opera' || name === 'winrar'}>
            <Icon size={10}>{ICONS[name]}</Icon>
          </AppButton>
        ))}
      </Apps>
      <Tray>
        <Icon size={7}>{ICONS.up}</Icon>
        <Icon size={7}>{ICONS.wifi}</Icon>
        <Icon size={7}>{ICONS.sound}</Icon>
        <Icon size={7}>{ICONS.battery}</Icon>
        <Clock>12:44 PM<br />9/21/2022</Clock>
        <Count>1</Count>
      </Tray>
    </Taskbar>
  </>
)

export default App
